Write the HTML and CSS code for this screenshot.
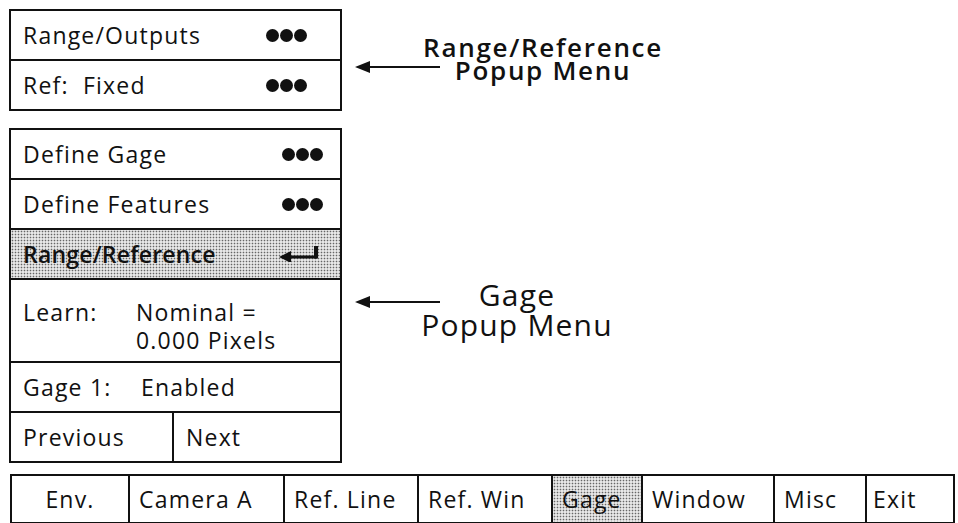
FILE: index.html
```html
<!DOCTYPE html>
<html lang="en">
<head>
    <meta charset="UTF-8">
    <meta name="viewport" content="width=device-width, initial-scale=1.0">
    <title>Gage Popup Menu</title>
    <link rel="stylesheet" href="styles.css">
</head>
<body>
    <div class="screen">
        <div class="top">
            <div class="menus">
                <div class="menu">
                    <div class="row wide-dots"><span>Range/Outputs</span><span class="dots"><i></i><i></i><i></i></span></div>
                    <div class="row wide-dots"><span>Ref:&nbsp; Fixed</span><span class="dots"><i></i><i></i><i></i></span></div>
                </div>
                <div class="menu gage-menu">
                    <div class="row"><span>Define Gage</span><span class="dots"><i></i><i></i><i></i></span></div>
                    <div class="row"><span>Define Features</span><span class="dots"><i></i><i></i><i></i></span></div>
                    <div class="row selected">
                        <span>Range/Reference</span>
                        <svg class="enter" width="42" height="16" viewBox="0 0 42 16">
                            <polygon points="0,11 12,5 12,17" fill="#111"/>
                            <rect x="10" y="9.5" width="28" height="3" fill="#111"/>
                            <rect x="35" y="0" width="4" height="12.5" fill="#111"/>
                        </svg>
                    </div>
                    <div class="row learn">
                        <span class="lbl">Learn:</span>
                        <span>Nominal =<br>0.000 Pixels</span>
                    </div>
                    <div class="row"><span class="lbl gage-lbl">Gage 1:</span><span class="grow">Enabled</span></div>
                    <div class="row split">
                        <div class="half prev">Previous</div>
                        <div class="half">Next</div>
                    </div>
                </div>
            </div>

            <div class="notes">
                <div class="note note-ref">
                    <svg class="arrow" width="85" height="12" viewBox="0 0 85 12">
                        <polygon points="0,6 15,0 15,12" fill="#111"/>
                        <rect x="14" y="5" width="71" height="2" fill="#111"/>
                    </svg>
                    <div class="label">
                        <div>Range/Reference</div>
                        <div>Popup Menu</div>
                    </div>
                </div>
                <div class="note note-gage">
                    <svg class="arrow" width="85" height="12" viewBox="0 0 85 12">
                        <polygon points="0,6 15,0 15,12" fill="#111"/>
                        <rect x="14" y="5" width="71" height="2" fill="#111"/>
                    </svg>
                    <div class="label">
                        <div>Gage</div>
                        <div>Popup Menu</div>
                    </div>
                </div>
            </div>
        </div>

        <div class="tabs">
            <div class="tab env">Env.</div>
            <div class="tab">Camera A</div>
            <div class="tab">Ref. Line</div>
            <div class="tab">Ref. Win</div>
            <div class="tab selected">Gage</div>
            <div class="tab">Window</div>
            <div class="tab">Misc</div>
            <div class="tab exit">Exit</div>
        </div>
    </div>
</body>
</html>
```

FILE: styles.css
```css
body {
    margin: 0;
    background: #fff;
    color: #111;
    font-family: "Open Sans", "Noto Sans", sans-serif;
    font-size: 23px;
    letter-spacing: 1.2px;
    overflow: hidden;
}
.screen {
    padding: 9px 0 0 9px;
    width: 958px;
    height: 523px;
    box-sizing: border-box;
}
.top {
    display: flex;
}
.menus {
    width: 333px;
}
.menu {
    border: 2px solid #111;
}
.gage-menu {
    margin-top: 17px;
}
.row {
    height: 48px;
    display: flex;
    align-items: center;
    justify-content: space-between;
    padding: 0 17px 0 12px;
    border-top: 2px solid #111;
    white-space: nowrap;
}
.row:first-child {
    border-top: none;
}
.wide-dots {
    padding-right: 33px;
}
.dots {
    display: flex;
    gap: 1px;
}
.dots i {
    width: 13px;
    height: 13px;
    border-radius: 50%;
    background: #111;
}
.selected {
    background-color: #e6e6e6;
    background-image: radial-gradient(circle, #666 0.7px, transparent 1.1px);
    background-size: 3px 3px;
}
.row.selected span {
    font-weight: 600;
    letter-spacing: 0.2px;
}
.enter {
    margin-right: 2px;
}
.learn {
    align-items: flex-start;
    justify-content: flex-start;
    padding-top: 18px;
    box-sizing: border-box;
    height: 83px;
    line-height: 28px;
}
.lbl {
    width: 113px;
}
.gage-lbl {
    width: 118px;
}
.row .grow {
    flex: 1;
}
.split {
    padding: 0;
    justify-content: flex-start;
    align-items: stretch;
}
.half {
    display: flex;
    align-items: center;
    padding-left: 12px;
    flex: 1;
}
.prev {
    flex: none;
    width: 149px;
    border-right: 2px solid #111;
}
.notes {
    padding: 26px 0 0 13px;
}
.note {
    display: flex;
    align-items: flex-start;
}
.note-ref {
    height: 48px;
}
.note-ref .arrow {
    margin-top: 26px;
}
.note-ref .label {
    width: 250px;
    margin-left: -22px;
    padding-top: 1px;
    text-align: center;
    font-size: 26px;
    font-weight: 600;
    letter-spacing: 1.7px;
    line-height: 23px;
}
.note-gage {
    margin-top: 197px;
}
.note-gage .arrow {
    margin-top: 16px;
}
.note-gage .label {
    width: 200px;
    margin-left: -23px;
    text-align: center;
    font-size: 30px;
    letter-spacing: 1.2px;
    line-height: 30px;
}
.tabs {
    display: grid;
    grid-template-columns: 116px 155px 134px 134px 90px 132px 92px 90px;
    width: 945px;
    height: 50px;
    margin-top: 11px;
    margin-left: 1px;
    border: 2px solid #111;
    box-sizing: border-box;
}
.tab {
    display: flex;
    align-items: center;
    padding-left: 9px;
    border-left: 2px solid #111;
    white-space: nowrap;
}
.tab:first-child {
    border-left: none;
}
.env {
    justify-content: center;
    padding-left: 0;
}
.exit {
    padding-left: 6px;
}
```
